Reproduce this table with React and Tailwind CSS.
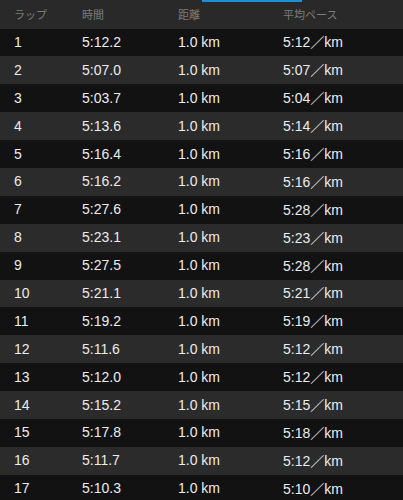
import React from 'react';

const laps = [
    ['1', '5:12.2', '5:12'],
    ['2', '5:07.0', '5:07'],
    ['3', '5:03.7', '5:04'],
    ['4', '5:13.6', '5:14'],
    ['5', '5:16.4', '5:16'],
    ['6', '5:16.2', '5:16'],
    ['7', '5:27.6', '5:28'],
    ['8', '5:23.1', '5:23'],
    ['9', '5:27.5', '5:28'],
    ['10', '5:21.1', '5:21'],
    ['11', '5:19.2', '5:19'],
    ['12', '5:11.6', '5:12'],
    ['13', '5:12.0', '5:12'],
    ['14', '5:15.2', '5:15'],
    ['15', '5:17.8', '5:18'],
    ['16', '5:11.7', '5:12'],
    ['17', '5:10.3', '5:10'],
];

const App = () => {
    return (
        <div className="h-[500px] w-[403px] overflow-hidden bg-[#121212] font-['Liberation_Sans','Noto_Sans_CJK_JP',sans-serif]">
            {/* Header */}
            <div className="relative flex h-[28.5px] items-center bg-[#292929] text-[11px] text-[#7c7c7c] font-['Noto_Sans_CJK_JP',sans-serif]">
                <div className="absolute left-[202px] top-0 h-[2px] w-[100px] bg-[#1d8fd6]" />
                <span className="w-[82px] pl-[14px]">ラップ</span>
                <span className="w-[96px]">時間</span>
                <span className="w-[105px]">距離</span>
                <span>平均ペース</span>
            </div>

            {/* Rows */}
            {laps.map(([lap, time, pace], i) => (
                <div
                    key={lap}
                    className={`flex h-[27.9px] items-center text-[14px] text-[#ececec] ${i % 2 === 0 ? 'bg-[#121212]' : 'bg-[#2b2b2b]'}`}
                >
                    <span className="w-[82px] pl-[14px]">{lap}</span>
                    <span className="w-[96px]">{time}</span>
                    <span className="w-[105px]">1.0 km</span>
                    <span>{pace}<span className="font-['Noto_Sans_CJK_JP',sans-serif]">／</span>km</span>
                </div>
            ))}
        </div>
    );
};

export default App;
